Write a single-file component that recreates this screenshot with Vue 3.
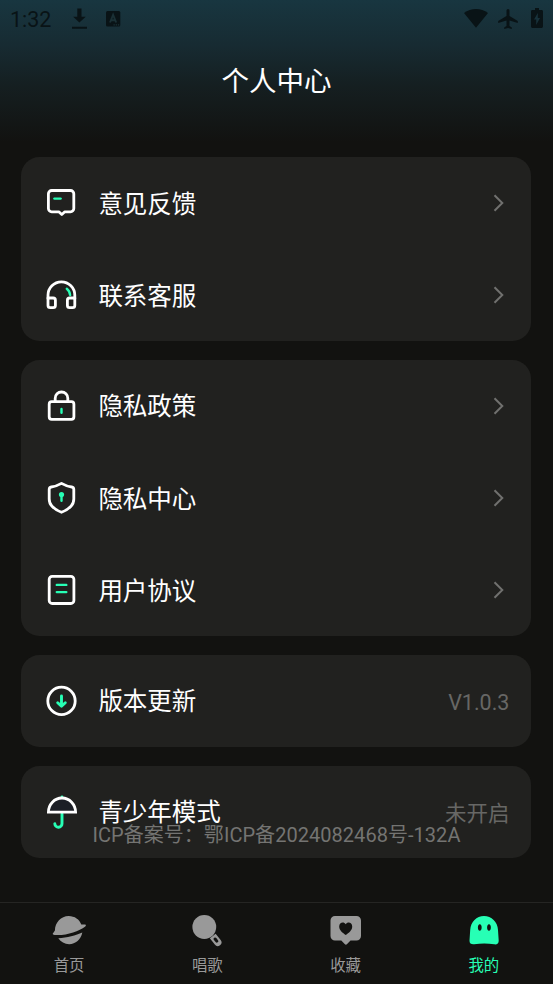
<script setup>
const groups = [
  [
    { icon: 'feedback', label: '意见反馈' },
    { icon: 'service', label: '联系客服' },
  ],
  [
    { icon: 'lock', label: '隐私政策' },
    { icon: 'shield', label: '隐私中心' },
    { icon: 'document', label: '用户协议' },
  ],
  [{ icon: 'update', label: '版本更新', value: 'V1.0.3', latin: true }],
  [{ icon: 'umbrella', label: '青少年模式', value: '未开启' }],
]
const tabs = [
  { icon: 'home', label: '首页' },
  { icon: 'sing', label: '唱歌' },
  { icon: 'favorite', label: '收藏' },
  { icon: 'mine', label: '我的', active: true },
]
</script>

<template>
  <div class="page">
    <header class="status">
      <span class="time">1:32</span>
      <svg class="download" width="16" height="22" viewBox="0 0 16 22">
        <path d="M5.3 0.5h4.2v8.3h4.2L7.4 14.5 1.2 8.8h4.1zM0 18.7h15v2H0z" />
      </svg>
      <svg class="app" width="15" height="16" viewBox="0 0 15 16">
        <rect width="14.3" height="15.6" rx="1.5" />
        <path class="app-mark" d="M4 11.5 7.1 3.8l3.1 7.7M5.1 9.2h4" />
        <path class="app-dots" d="M7.5 13.9h6" />
      </svg>
      <span class="spacer"></span>
      <svg class="wifi" width="24" height="19" viewBox="0 0 24 19">
        <path d="M0 4C7-1.2 17-1.2 24 4L12 18.8z" />
      </svg>
      <svg class="plane" width="20" height="20" viewBox="2 2 20 20">
        <path d="M21.8 16v-2l-8.3-5V3.5a1.5 1.5 0 0 0-3 0V9l-8.3 5v2l8.3-2.5V19l-2.3 1.5V22l3.8-1 3.8 1v-1.5L13.5 19v-5.500z" />
      </svg>
      <svg class="battery" width="12" height="20" viewBox="0 0 12 20">
        <path fill-rule="evenodd" d="M4 0h4v2h2.600Q12 2 12 3.400V18.600Q12 20 10.600 20H1.400Q0 20 0 18.600V3.400Q0 2 1.400 2H4zM6.800 5 3 11.500h2.200V17L9 10H6.800z" />
      </svg>
    </header>
    <h1>个人中心</h1>

    <main>
      <section v-for="(group, i) in groups" :key="i" class="card">
        <div v-for="row in group" :key="row.label" class="row">
          <svg class="icon" width="34" height="34" viewBox="-0.5 0 34 34">
            <template v-if="row.icon === 'feedback'">
              <path d="M7.200 4.500H26a3.300 3.300 0 0 1 3.300 3.300v14.700a3.300 3.300 0 0 1-3.300 3.300h-5.700L17.300 28.500 14.300 25.800H7.200a3.300 3.300 0 0 1-3.300-3.300V7.800a3.300 3.300 0 0 1 3.300-3.300z" />
              <path class="accent" d="M9.900 12.600h6.200" />
            </template>
            <template v-else-if="row.icon === 'service'">
              <path d="M3.500 20.500v-3.300a13.400 13.400 0 0 1 26.800 0v3.300" />
              <path d="M3.500 20h5.200a2.200 2.200 0 0 1 2.200 2.200v5.300a2.200 2.200 0 0 1-2.200 2.200H5.700a2.200 2.200 0 0 1-2.200-2.200zM30.300 20h-5.200a2.200 2.200 0 0 0-2.200 2.200v5.300a2.200 2.200 0 0 0 2.200 2.200h3a2.200 2.200 0 0 0 2.200-2.200z" />
              <path class="accent" d="M22.300 10.800Q25.200 13 25.600 17" />
            </template>
            <template v-else-if="row.icon === 'lock'">
              <rect x="4.700" y="12.700" width="24.700" height="17.600" rx="2.500" />
              <path d="M10.700 12.500V9.300a6.300 6.300 0 0 1 12.600 0v3.200" />
              <path class="accent" d="M17 20v3.800" />
            </template>
            <template v-else-if="row.icon === 'shield'">
              <path d="M17 2.400Q22.500 5.500 27.200 6Q29.300 6.400 29.300 8.500v9.600Q29.300 22.500 26.500 25.200Q22.500 29.300 17 31.300Q11.500 29.300 7.500 25.200Q4.700 22.500 4.700 18.100V8.500Q4.700 6.400 6.800 6Q11.500 5.500 17 2.400z" />
              <path class="accent" d="M17 14v5.800" />
              <circle class="accent-fill" cx="17" cy="13.500" r="2.600" />
            </template>
            <template v-else-if="row.icon === 'document'">
              <rect x="4.700" y="3.300" width="24.700" height="27.200" rx="3" />
              <path class="accent" d="M12.300 11.900h9.500M12.300 19.100h9.500" />
            </template>
            <template v-else-if="row.icon === 'update'">
              <circle cx="17" cy="16.900" r="13.700" />
              <path class="accent bold" d="M17 12v10.200M13.200 18.700 17 22.200l3.800-3.500" />
            </template>
            <template v-else>
              <path class="accent bold" d="M17.500 1.900v1M17.500 19v9.500a3.600 3.600 0 0 1-7.200.3" />
              <path class="canopy" d="M3.900 17.200a13.600 14.200 0 0 1 27.200 0z" />
            </template>
          </svg>
          <span class="label">{{ row.label }}</span>
          <span v-if="row.value" class="value" :class="{ latin: row.latin }">{{ row.value }}</span>
          <svg v-else class="chevron" width="12" height="18" viewBox="0 0 12 18">
            <path d="M1.500 1.200 9.300 9l-7.800 7.800" />
          </svg>
        </div>
      </section>
    </main>
    <p class="icp">ICP备案号：鄂ICP备2024082468号-132A</p>

    <nav>
      <div v-for="tab in tabs" :key="tab.label" class="tab" :class="{ active: tab.active }">
        <svg width="34" height="34" viewBox="0 0 34 34">
          <template v-if="tab.icon === 'home'">
            <path d="M2.900 17.500C3 9.500 9 3 16.700 3c6 0 10.800 3.500 12.600 8.500l3.800.1c1.100.1 1 1.200.2 1.800C26.500 18.500 14 22.800 2.500 21.900c-2 0-2.300-1.400-.9-2.500z" />
            <path d="M6.300 25.300C15 25 24 22.500 30.300 19.600C29 26.500 23.500 31.200 17.200 31.200c-4.500 0-8.400-2.200-10.900-5.900z" />
          </template>
          <template v-else-if="tab.icon === 'sing'">
            <circle cx="14.300" cy="14" r="11.900" />
            <path
              fill-rule="evenodd"
              transform="translate(26.300 27.500) rotate(-38)"
              d="M-3.700-5.800h7.400V2.300a3.700 3.700 0 0 1-7.400 0zM0-3.400a1.500 1.500 0 0 0-1.500 1.500V0.800a1.500 1.500 0 0 0 3 0V-1.900A1.500 1.500 0 0 0 0-3.400z"
            />
          </template>
          <template v-else-if="tab.icon === 'favorite'">
            <path fill-rule="evenodd" d="M6 3h21.500a4.500 4.500 0 0 1 4.500 4.500V23a4.500 4.500 0 0 1-4.500 4.500h-6l-3.400 3.600q-1.200 1.200-2.400 0l-3.400-3.600H6A4.500 4.500 0 0 1 1.500 23V7.500A4.500 4.500 0 0 1 6 3zM16.700 22c3-2.200 6.500-4.500 6.500-8.500 0-4-4.500-5.200-6.500-2.200-2-3-6.500-1.800-6.500 2.200 0 4 3.500 6.300 6.500 8.500z" />
          </template>
          <template v-else>
            <path fill-rule="evenodd" d="M17 3C24.500 3 30.500 8.800 31 17l.7 10.500c.2 3-2 4.300-4.500 3.800q-10-1.800-20 0c-2.700.4-4.900-.9-4.700-3.800L3.200 17C3.700 8.800 9.500 3 17 3zM12.800 11.300c-2.500 0-2.500 6.500 0 6.500s2.500-6.500 0-6.500zM22 11.300c-2.500 0-2.500 6.500 0 6.500s2.500-6.500 0-6.500z" />
          </template>
        </svg>
        <span>{{ tab.label }}</span>
      </div>
    </nav>
  </div>
</template>

<style>
body {
  margin: 0;
  background: #121210;
}
</style>

<style scoped>
.page {
  position: relative;
  display: flex;
  flex-direction: column;
  height: 984px;
  overflow: hidden;
  background: linear-gradient(#183640 0, #172b32 45px, #151f21 85px, #121210 142px);
  color: #fff;
  font-family: Roboto, "Noto Sans CJK SC", sans-serif;
}
.status {
  display: flex;
  align-items: flex-start;
  height: 38px;
  padding: 0 10px;
  box-sizing: border-box;
}
.status svg {
  flex: none;
  fill: #091316;
}
.time {
  width: 62px;
  padding-top: 7px;
  color: #091316;
  font-size: 21.500px;
  font-weight: 450;
  line-height: 25px;
}
.download { margin-top: 8px; }
.app { margin: 10.500px 0 0 18px; }
.status .app-mark { fill: none; stroke: #1a3035; stroke-width: 1.900; }
.status .app-dots { stroke: #1a3035; stroke-width: 1.300; stroke-dasharray: 1.300 .9; }
.spacer { flex: 1; }
.wifi { margin-top: 8.500px; }
.plane { margin: 8.500px 0 0 10px; }
.battery { margin: 8px 0 0 13px; }
h1 {
  height: 84px;
  margin: 0;
  padding-top: 2px;
  box-sizing: border-box;
  font-size: 27.500px;
  font-weight: 400;
  line-height: 84px;
  text-align: center;
}
main {
  display: flex;
  flex-direction: column;
  gap: 18.500px;
  padding: 35.100px 21.600px 0 21.400px;
}
.card {
  border-radius: 18.500px;
  background: #21211f;
}
.row {
  display: flex;
  align-items: center;
  height: 92.160px;
  padding: 0 22px 0 22.700px;
}
.icon {
  fill: none;
  stroke: #fff;
  stroke-width: 2.800;
  stroke-linecap: round;
  stroke-linejoin: round;
}
.icon .accent { stroke: #27ffb5; stroke-width: 2.400; }
.icon .bold { stroke-width: 2.900; }
.icon .accent-fill { fill: #27ffb5; stroke: none; }
.icon .canopy { fill: #1c1f26; stroke-linejoin: miter; }
.label {
  flex: 1;
  margin-left: 20.300px;
  padding-bottom: 2px;
  font-size: 24.500px;
}
.value {
  color: #676765;
  font-size: 21.500px;
}
.latin { padding-top: 3px; }
.chevron {
  margin-right: 4.600px;
  fill: none;
  stroke: #70706e;
  stroke-width: 2;
}
.icp {
  position: absolute;
  top: 821px;
  left: 0;
  width: 100%;
  margin: 0;
  color: #747472;
  font-size: 20px;
  letter-spacing: 0.040px;
  line-height: 29px;
  text-align: center;
}
nav {
  display: grid;
  grid-template-columns: repeat(4, 1fr);
  height: 82px;
  margin-top: auto;
  box-sizing: border-box;
  border-top: 1px solid #252523;
}
.tab {
  display: flex;
  flex-direction: column;
  align-items: center;
  padding-top: 10px;
  color: #999;
  font-size: 15.400px;
  line-height: 22px;
}
.tab svg { fill: currentColor; }
.tab span { margin-top: 8px; }
.active { color: #27ffb5; }
</style>
